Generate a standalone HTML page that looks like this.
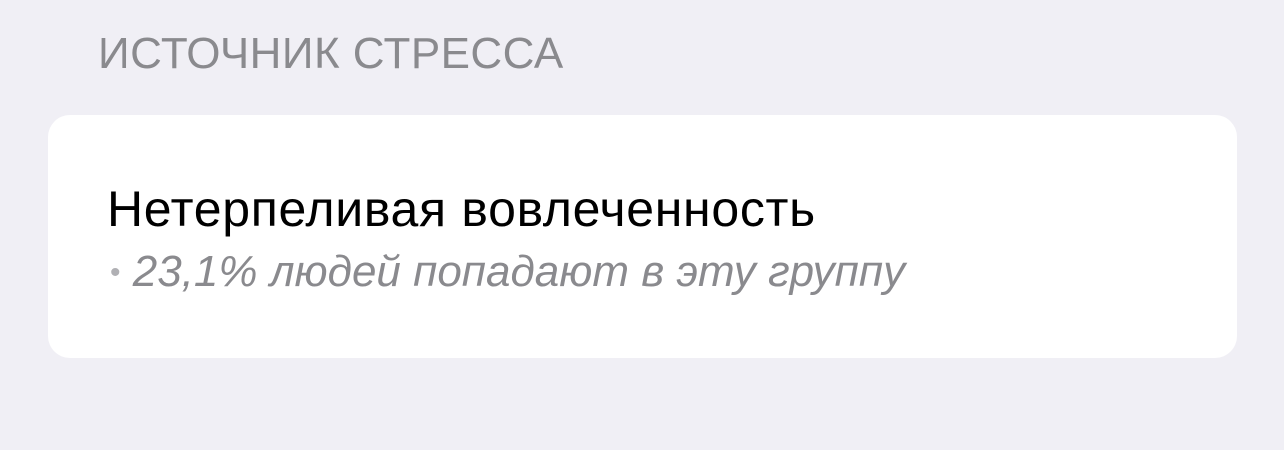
<!DOCTYPE html>
<html><head><meta charset="utf-8"><style>
html,body{margin:0;padding:0;width:1284px;height:450px;background:#f0eff5;overflow:hidden;font-family:"Liberation Sans",sans-serif;}
.h{position:absolute;left:98px;top:29px;font-size:44px;color:#8a8a8e;letter-spacing:0.45px;white-space:nowrap;}
.card{position:absolute;left:48px;top:115px;width:1189px;height:243px;background:#fff;border-radius:22px;}
.t{position:absolute;left:107px;top:180px;font-size:50px;color:#000;letter-spacing:0.7px;white-space:nowrap;}
.s{position:absolute;left:110px;top:247px;font-size:44px;color:#8a8a8e;font-style:italic;white-space:nowrap;}
.b{font-style:normal;font-size:30px;color:#b0b0b4;vertical-align:4px;}
</style></head><body>
<div class="h">ИСТОЧНИК СТРЕССА</div>
<div class="card"></div>
<div class="t">Нетерпеливая вовлеченность</div>
<div class="s"><span class="b">•</span> 23,1% людей попадают в эту группу</div>
</body></html>
